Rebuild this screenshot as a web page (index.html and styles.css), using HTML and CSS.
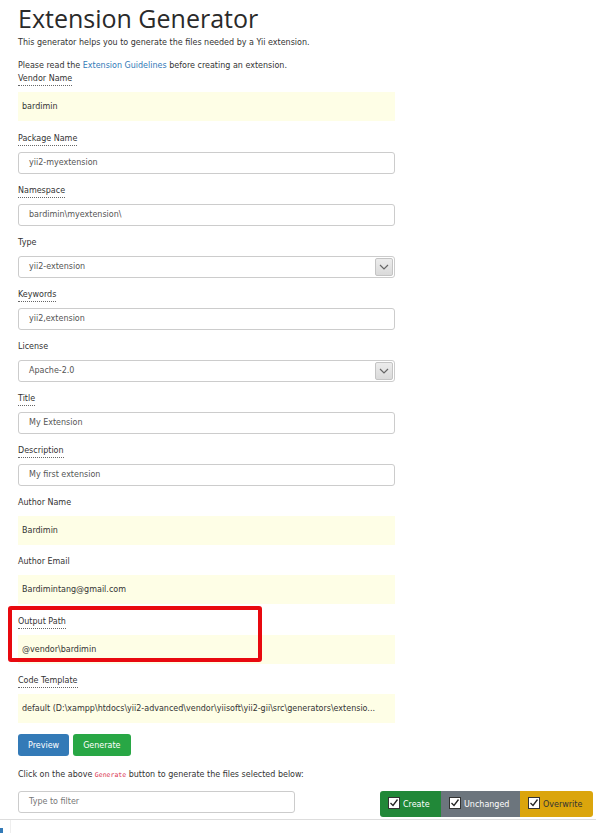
FILE: index.html
```html
<!DOCTYPE html>
<html lang="en">
  <head>
    <meta charset="utf-8">
    <title>Extension Generator</title>
    <link rel="stylesheet" href="styles.css">
  </head>
  <body>
<div class="page">
  <h1>Extension Generator</h1>
  <p class="intro">This generator helps you to generate the files needed by a Yii extension.</p>
  <p class="intro second">Please read the <a href="#">Extension Guidelines</a> before creating an extension.</p>

  <div class="group first">
    <label class="hint">Vendor Name</label>
    <div class="sticky">bardimin</div>
  </div>
  <div class="group">
    <label class="hint">Package Name</label>
    <div class="field">yii2-myextension</div>
  </div>
  <div class="group">
    <label class="hint">Namespace</label>
    <div class="field">bardimin\myextension\</div>
  </div>
  <div class="group">
    <label>Type</label>
    <div class="field select">yii2-extension<span class="arrow"><svg width="10" height="6" viewBox="0 0 10 6"><path d="M1 1 L5 5 L9 1" fill="none" stroke="#666" stroke-width="1.2"/></svg></span></div>
  </div>
  <div class="group">
    <label class="hint">Keywords</label>
    <div class="field">yii2,extension</div>
  </div>
  <div class="group">
    <label>License</label>
    <div class="field select">Apache-2.0<span class="arrow"><svg width="10" height="6" viewBox="0 0 10 6"><path d="M1 1 L5 5 L9 1" fill="none" stroke="#666" stroke-width="1.2"/></svg></span></div>
  </div>
  <div class="group">
    <label class="hint">Title</label>
    <div class="field">My Extension</div>
  </div>
  <div class="group">
    <label class="hint">Description</label>
    <div class="field">My first extension</div>
  </div>
  <div class="group">
    <label>Author Name</label>
    <div class="sticky">Bardimin</div>
  </div>
  <div class="group wide">
    <label>Author Email</label>
    <div class="sticky">Bardimintang@gmail.com</div>
  </div>
  <div class="group marked">
    <label class="hint">Output Path</label>
    <div class="sticky">@vendor\bardimin</div>
    <div class="redbox"></div>
  </div>
  <div class="group">
    <label class="hint">Code Template</label>
    <div class="sticky">default (D:\xampp\htdocs\yii2-advanced\vendor\yiisoft\yii2-gii\src\generators\extensio...</div>
  </div>

  <div class="buttons">
    <button class="btn blue">Preview</button>
    <button class="btn green">Generate</button>
  </div>
  <p class="note">Click on the above <code>Generate</code> button to generate the files selected below:</p>

  <div class="filterRow">
    <div class="field filter">Type to filter</div>
    <div class="legend">
      <span class="item create"><span class="box"><svg width="10" height="10" viewBox="0 0 10 10"><path d="M1.5 5 L4 7.5 L8.5 1.5" fill="none" stroke="#222" stroke-width="1.3"/></svg></span>Create</span>
      <span class="item unchanged"><span class="box"><svg width="10" height="10" viewBox="0 0 10 10"><path d="M1.5 5 L4 7.5 L8.5 1.5" fill="none" stroke="#222" stroke-width="1.3"/></svg></span>Unchanged</span>
      <span class="item overwrite"><span class="box"><svg width="10" height="10" viewBox="0 0 10 10"><path d="M1.5 5 L4 7.5 L8.5 1.5" fill="none" stroke="#222" stroke-width="1.3"/></svg></span>Overwrite</span>
    </div>
  </div>
</div>
<div class="tableTop">
  <span class="corner"></span>
  <span class="divider"></span>
</div>
  </body>
</html>
```

FILE: styles.css
```css
* {
  margin: 0px;
  padding: 0px;
  box-sizing: border-box;
}
body {
  font-family: 'DejaVu Sans', Verdana, sans-serif;
  font-size: 8px;
  color: #333;
  background-color: white;
}
.page {
  padding: 0px 201px 0px 18px;
}
h1 {
  font-family: 'Open Sans', sans-serif;
  font-weight: normal;
  font-size: 25px;
  line-height: 28px;
  padding-top: 4px;
  color: #2a2a2a;
}
.intro {
  line-height: 12px;
  margin-top: 5px;
}
.intro.second {
  margin-top: 11px;
}
a {
  color: #337ab7;
  text-decoration: none;
}
.group {
  display: flex;
  flex-direction: column;
  align-items: flex-start;
  margin-bottom: 11px;
}
.group.first {
  margin-top: 1px;
  margin-bottom: 12px;
}
.group.wide {
  margin-bottom: 12px;
}
label {
  display: inline-block;
  line-height: 12px;
  border-bottom: 1px solid transparent;
  margin-bottom: 6px;
}
label.hint {
  border-bottom: 1px dotted #666;
}
.field {
  width: 100%;
  height: 22px;
  line-height: 20px;
  border: 1px solid #ccc;
  border-radius: 3px;
  padding-left: 10px;
  color: #555;
}
.sticky {
  width: 100%;
  height: 29px;
  line-height: 29px;
  padding-left: 4px;
  background-color: #fefee6;
  white-space: nowrap;
  overflow: hidden;
}
.select {
  display: flex;
  justify-content: space-between;
  padding-right: 1px;
}
.arrow {
  width: 18px;
  height: 18px;
  margin-top: 1px;
  display: flex;
  align-items: center;
  justify-content: center;
  background: linear-gradient(#ececec, #dadada);
  border: 1px solid #c4c4c4;
  border-radius: 2px;
}
.marked {
  position: relative;
}
.redbox {
  position: absolute;
  left: -10px;
  top: -10px;
  width: 254px;
  height: 56px;
  border: 4px solid #e8090f;
  border-radius: 3px;
}
.buttons {
  display: flex;
  gap: 4px;
  margin-top: 1px;
}
.btn {
  font-family: 'DejaVu Sans', Verdana, sans-serif;
  font-size: 8px;
  color: white;
  border: none;
  border-radius: 3px;
  height: 22px;
  padding: 0px 10px;
}
.blue {
  background-color: #337ab7;
}
.green {
  background-color: #28a745;
}
.note {
  margin-top: 13px;
  line-height: 12px;
}
code {
  font-family: 'DejaVu Sans Mono', monospace;
  font-size: 6.5px;
  color: #d9304f;
}
.filterRow {
  display: flex;
  justify-content: space-between;
  align-items: flex-start;
  margin-top: 10px;
  margin-right: -198px;
}
.filter {
  width: 277px;
  color: #777;
}
.legend {
  display: flex;
  height: 26px;
}
.item {
  display: flex;
  align-items: center;
  gap: 3px;
  color: white;
  padding: 0px 8px;
  white-space: nowrap;
}
.create {
  background-color: #218838;
  border-radius: 3px 0px 0px 3px;
  width: 61px;
}
.unchanged {
  background-color: #6c757d;
  width: 79px;
}
.overwrite {
  background-color: #dba50c;
  color: #333;
  width: 73px;
  border-radius: 0px 3px 3px 0px;
}
.box {
  flex-shrink: 0;
  width: 12px;
  height: 12px;
  background: white;
  border: 1px solid #333;
  display: flex;
  align-items: center;
  justify-content: center;
  margin-top: -3px;
}
.tableTop {
  margin-top: 2px;
  border-top: 1px solid #ddd;
  height: 20px;
  display: flex;
}
.corner {
  width: 3px;
  height: 5px;
  margin-top: 8px;
  background-color: #337ab7;
}
.divider {
  margin-left: 7px;
  width: 1px;
  background-color: #eee;
}
```
